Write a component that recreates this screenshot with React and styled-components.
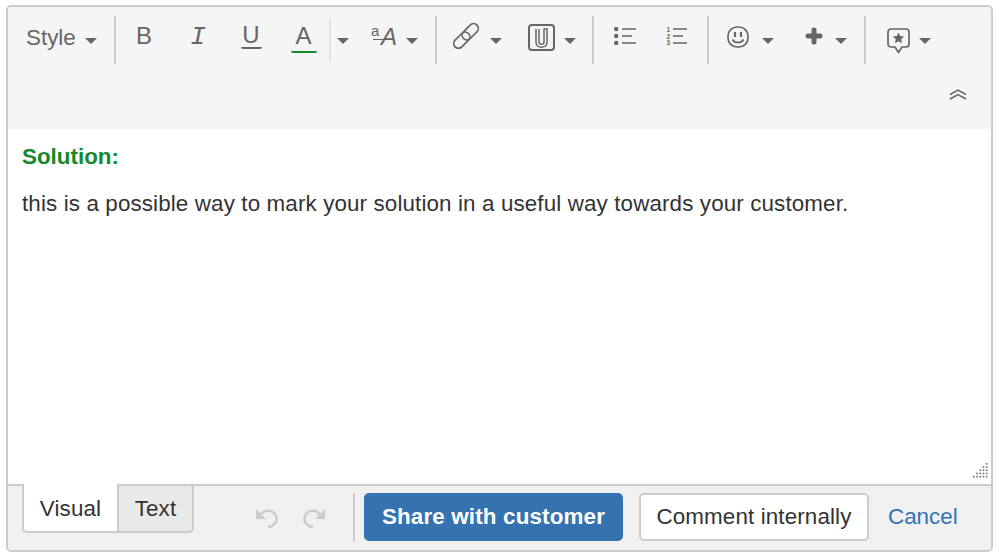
import React from 'react'
import styled, {createGlobalStyle} from 'styled-components'

const Global = createGlobalStyle`
  * { box-sizing: border-box; }
  html, body { margin: 0; padding: 0; background: #fff; }
  body { font-family: 'Liberation Sans', Arial, sans-serif; }
`

const Frame = styled.div`
  margin: 5px 0 0 6px;
  width: 987px;
  height: 547px;
  display: flex;
  flex-direction: column;
  border: 2px solid #ccc;
  border-radius: 5px;
  overflow: hidden;
`

const Toolbar = styled.div`
  height: 122px;
  flex: none;
  background: #f5f5f5;
  padding-top: 9px;
  display: flex;
  flex-direction: column;
`

const ToolRow = styled.div`
  display: flex;
  align-items: center;
  height: 48px;
`

const Sep = styled.span`
  flex: none;
  width: 2px;
  height: ${p => p.$short ? 44 : 48}px;
  background: ${p => p.$short ? '#e2e2e2' : '#ccc'};
`

const Tool = styled.div`
  flex: none;
  width: ${p => p.$w}px;
  padding-left: ${p => p.$pl || 0}px;
  display: flex;
  align-items: center;
  gap: ${p => p.$gap || 0}px;
  color: #666;
`

const Caret = styled.span`
  flex: none;
  width: 0;
  height: 0;
  margin-top: 2px;
  border-left: 6.5px solid transparent;
  border-right: 6.5px solid transparent;
  border-top: 6px solid #666;
`

const StyleLabel = styled.span`
  font-size: 22.4px;
  line-height: 26px;
  margin-bottom: 4px;
`

const Glyph = styled.span`
  display: block;
  width: 100%;
  padding-left: 2px;
  margin-bottom: ${p => p.$mono ? 6 : 9}px;
  text-align: center;
  font-family: ${p => p.$mono ? "'Liberation Mono', monospace" : "'Liberation Sans', Arial, sans-serif"};
  font-style: ${p => p.$mono ? 'italic' : 'normal'};
  font-size: ${p => p.$mono ? 26 : 24}px;
  line-height: 26px;
`

const Underlined = styled.span`
  display: block;
  width: ${p => p.$w}px;
  margin: 0 auto ${p => p.$mb}px;
  padding: ${p => p.$top}px 0 ${p => p.$bottom}px;
  text-align: center;
  font-size: 24px;
  line-height: 24px;
  border-bottom: ${p => p.$bar}px solid ${p => p.$color};
  border-radius: 0 0 2px 2px;
`

const TextSize = styled.span`
  position: relative;
  display: block;
  width: 25px;
  height: 24px;
  margin-bottom: 7px;
  font-size: 24px;
  line-height: 24px;
  font-style: italic;
  text-align: right;
  &::after {
    content: '';
    position: absolute;
    left: 1px;
    right: 10px;
    top: 14px;
    height: 1.5px;
    background: #666;
  }
`

const TinyA = styled.span`
  position: absolute;
  left: -1px;
  top: -1px;
  font-size: 15px;
  line-height: 14px;
  font-style: normal;
`

const Icon = styled.svg`
  flex: none;
  display: block;
  fill: none;
  stroke: #666;
  margin-bottom: ${p => p.$mb || 0}px;
`

const BottomRow = styled.div`
  display: flex;
  justify-content: flex-end;
  padding: 25px 24px 0 0;
`

const Editor = styled.div`
  position: relative;
  flex: 1;
  background: #fff;
  padding: 14px 14px;
  color: #333;
  font-size: 22.4px;
  line-height: 28px;
`

const Heading = styled.div`
  color: #14892c;
  font-weight: 700;
  margin-bottom: 19px;
`

const Para = styled.div`
  letter-spacing: 0.12px;
`

const Resize = styled.svg`
  position: absolute;
  right: 3px;
  bottom: 6px;
  fill: #777;
`

const Footer = styled.div`
  flex: none;
  height: 66px;
  display: flex;
  align-items: flex-start;
  background: #f0f0f0;
  border-top: 2px solid #ccc;
  padding-left: 14px;
`

const Tabs = styled.div`
  display: flex;
  margin-top: -2px;
`

const Tab = styled.div`
  height: 49px;
  width: ${p => p.$w}px;
  padding-top: ${p => p.$active ? 11 : 9}px;
  text-align: center;
  font-size: 22.4px;
  line-height: 28px;
  letter-spacing: 0.12px;
  color: #333;
  background: ${p => p.$active ? '#fff' : '#e9e9e9'};
  border: 2px solid #ccc;
  border-top-width: ${p => p.$active ? 0 : 2}px;
  border-right-width: ${p => p.$active ? 0 : 2}px;
  border-radius: ${p => p.$active ? '0 0 0 5px' : '4px 4px 5px 0'};
`

const History = styled.div`
  display: flex;
  gap: 25px;
  margin: 21px 28px 0 62px;
`

const HistoryIcon = styled.svg`
  display: block;
  fill: none;
  stroke: #ccc;
  stroke-width: 2.6;
  transform: ${p => p.$flip ? 'scaleX(-1)' : 'none'};
`

const FootSep = styled.span`
  flex: none;
  width: 2px;
  height: 49px;
  margin: 7px 9px 0 0;
  background: #ccc;
`

const Button = styled.div`
  height: 48px;
  margin: 7px 16px 0 0;
  width: ${p => p.$w}px;
  display: flex;
  align-items: center;
  justify-content: center;
  border-radius: 5px;
  font-size: 22.4px;
  font-weight: ${p => p.$primary ? 700 : 400};
  letter-spacing: ${p => p.$primary ? '0.15px' : '0.12px'};
  color: ${p => p.$primary ? '#fff' : '#333'};
  background: ${p => p.$primary ? '#3572b0' : '#fff'};
  border: 2px solid ${p => p.$primary ? '#3572b0' : '#ccc'};
`

const Cancel = styled.a`
  margin: 17px 0 0 3px;
  font-size: 22.4px;
  line-height: 28px;
  color: #3572b0;
`

const LinkIcon = () => (
  <Icon $mb={8} width='26' height='26' viewBox='0 0 26 26' strokeWidth='1.7'>
    <rect x='-0.700' y='12.450' width='19' height='9.5' rx='4.750' transform='rotate(-45 8.800 17.200)' />
    <rect x='7.700' y='4.050' width='19' height='9.5' rx='4.750' transform='rotate(-45 17.200 8.800)' />
  </Icon>
)

const AttachIcon = () => (
  <Icon $mb={6} width='27' height='27' viewBox='0 0 27 27' strokeWidth='2'>
    <rect x='1' y='1' width='25' height='25' rx='3' />
    <path strokeWidth='1.5' d='M8 5v13c0 7 11 7 11 0V5h-3v13c0 3-5 3-5 0V5' />
  </Icon>
)

const BulletIcon = () => (
  <Icon $mb={8} width='22' height='18' viewBox='0 0 22 18' strokeWidth='1.6'>
    <circle cx='2.2' cy='2' r='2.2' fill='#666' stroke='none' />
    <circle cx='2.2' cy='9' r='2.2' fill='#666' stroke='none' />
    <circle cx='2.2' cy='16' r='2.2' fill='#666' stroke='none' />
    <path d='M8 2h14M8 9h10M8 16h14' />
  </Icon>
)

const NumberIcon = () => (
  <Icon $mb={8} width='21' height='18' viewBox='0 0 21 18' strokeWidth='1.6'>
    <g fill='#666' stroke='none' fontSize='6.500' fontWeight='700' fontFamily="'Liberation Sans', sans-serif">
      <text x='0.500' y='5'>1</text>
      <text x='0.500' y='11.500'>2</text>
      <text x='0.500' y='18'>3</text>
    </g>
    <path d='M7 2h14M7 9h10M7 16h14' />
  </Icon>
)

const SmileIcon = () => (
  <Icon $mb={7} width='22' height='22' viewBox='0 0 22 22' strokeWidth='1.7'>
    <rect x='1' y='1' width='20' height='20' rx='9' />
    <path strokeWidth='2.2' d='M8 6v5M14 6v5' />
    <path d='M5.500 13.500c2 4 9 4 11 0' />
  </Icon>
)

const PlusIcon = () => (
  <Icon $mb={8} width='18' height='18' viewBox='0 0 18 18' strokeWidth='5' strokeLinecap='round'>
    <path d='M9 3v12M3 9h12' />
  </Icon>
)

const StarIcon = () => (
  <Icon $mb={-1} width='23' height='26' viewBox='0 0 23 26' strokeWidth='1.7'>
    <path strokeLinejoin='round' d='M4 1h15a3 3 0 0 1 3 3v12a3 3 0 0 1-3 3h-4l-3.500 5.500L8 19H4a3 3 0 0 1-3-3V4a3 3 0 0 1 3-3z' />
    <path fill='#666' stroke='none' d='M11.500 4.500l1.700 3.600 3.900.5-2.900 2.700.8 3.900-3.500-2-3.500 2 .8-3.900-2.900-2.700 3.900-.5z' />
  </Icon>
)

const CollapseIcon = () => (
  <Icon width='18' height='11' viewBox='0 0 18 11' strokeWidth='1.5'>
    <path d='M1 5.500L9 1l8 4.500M1 10l8-4.500 8 4.500' />
  </Icon>
)

const HistoryArrow = ({flip}) => (
  <HistoryIcon $flip={flip} width='22' height='21' viewBox='0 0 22 21'>
    <path d='M4 9C7 3 17 1 20 9c2 6-2 10-8 11' />
    <path fill='#ccc' stroke='none' d='M0 2v10h10z' />
  </HistoryIcon>
)

// little triangle of dots in the editor corner
const dots = []
for (let row = 0; row < 5; row++) {
  for (let col = 4 - row; col < 5; col++) {
    dots.push(<rect key={row + '-' + col} x={col * 3.2} y={row * 3.2} width='1.7' height='1.7' />)
  }
}

export default function App () {
  return (
    <>
      <Global />
      <Frame>
        <Toolbar>
          <ToolRow>
            <Tool $w={106} $pl={18} $gap={9}><StyleLabel>Style</StyleLabel><Caret /></Tool>
            <Sep />
            <Tool $w={54}><Glyph>B</Glyph></Tool>
            <Tool $w={54}><Glyph $mono>I</Glyph></Tool>
            <Tool $w={54}><Underlined $w={21} $top={0} $bottom={0} $bar={2} $mb={8} $color='#666'>U</Underlined></Tool>
            <Tool $w={51}><Underlined $w={26} $top={1} $bottom={3} $bar={2} $mb={5} $color='#14892c'>A</Underlined></Tool>
            <Sep $short />
            <Tool $w={25} $pl={6}><Caret /></Tool>
            <Tool $w={79} $pl={16} $gap={9}>
              <TextSize><TinyA>a</TinyA>A</TextSize>
              <Caret />
            </Tool>
            <Sep />
            <Tool $w={78} $pl={16} $gap={11}><LinkIcon /><Caret /></Tool>
            <Tool $w={77} $pl={13} $gap={9}><AttachIcon /><Caret /></Tool>
            <Sep />
            <Tool $w={52} $pl={20}><BulletIcon /></Tool>
            <Tool $w={61} $pl={20}><NumberIcon /></Tool>
            <Sep />
            <Tool $w={77} $pl={18} $gap={13}><SmileIcon /><Caret /></Tool>
            <Tool $w={78} $pl={19} $gap={12}><PlusIcon /><Caret /></Tool>
            <Sep />
            <Tool $w={80} $pl={21} $gap={9}><StarIcon /><Caret /></Tool>
          </ToolRow>
          <BottomRow><CollapseIcon /></BottomRow>
        </Toolbar>
        <Editor>
          <Heading>Solution:</Heading>
          <Para>this is a possible way to mark your solution in a useful way towards your customer.</Para>
          <Resize width='15' height='15' viewBox='0 0 15 15'>{dots}</Resize>
        </Editor>
        <Footer>
          <Tabs>
            <Tab $active $w={95}>Visual</Tab>
            <Tab $w={77}>Text</Tab>
          </Tabs>
          <History>
            <HistoryArrow />
            <HistoryArrow flip />
          </History>
          <FootSep />
          <Button $primary $w={259}>Share with customer</Button>
          <Button $w={230}>Comment internally</Button>
          <Cancel>Cancel</Cancel>
        </Footer>
      </Frame>
    </>
  )
}
